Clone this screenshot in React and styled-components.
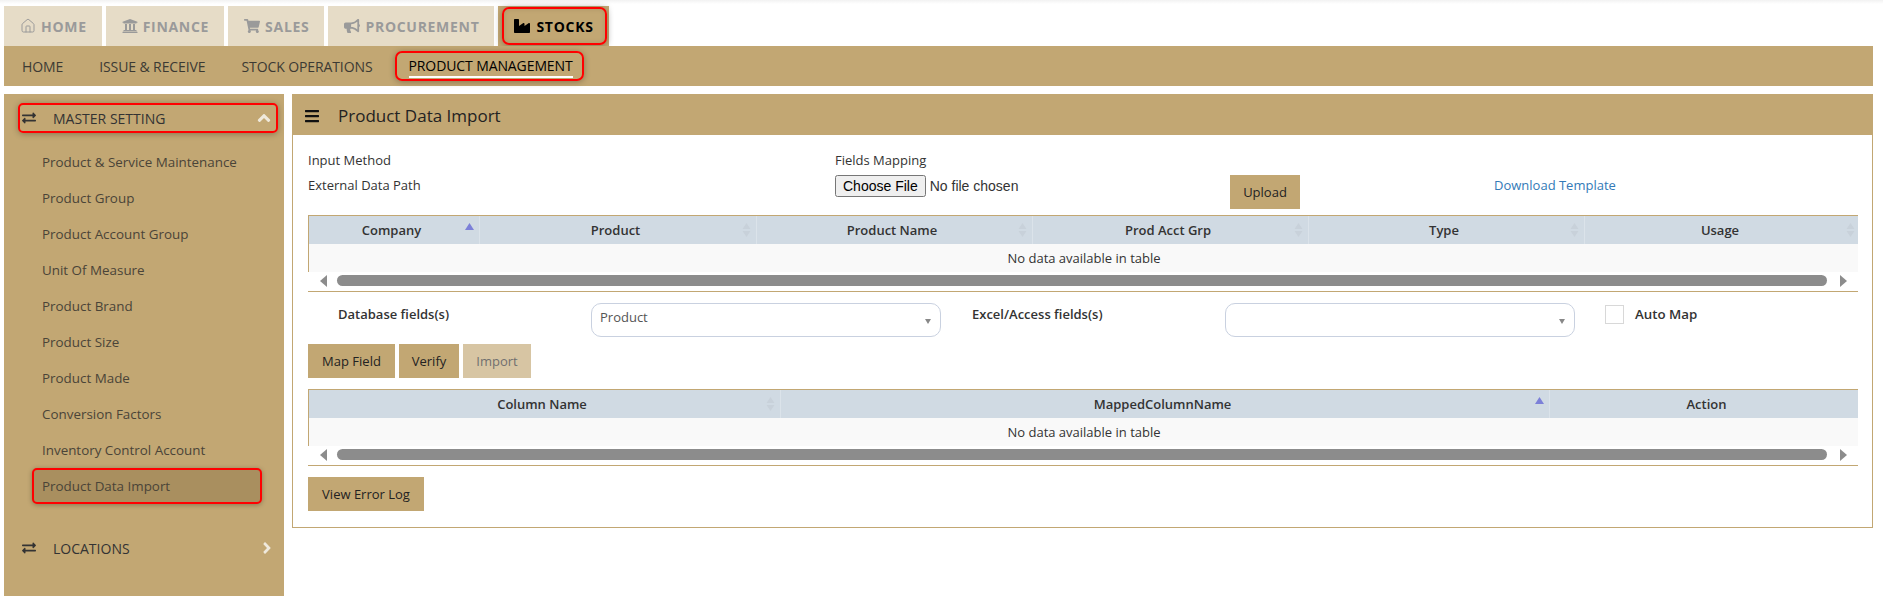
import React from "react";
import styled, { createGlobalStyle } from "styled-components";
import { FaUniversity, FaShoppingCart, FaBullhorn, FaIndustry, FaExchangeAlt, FaBars, FaAngleUp, FaAngleRight } from "react-icons/fa";
import { Home } from "lucide-react";

const TAN = "#c2a773";

const Global = createGlobalStyle`
  html, body { margin: 0; padding: 0; background: #fff; overflow: hidden; }
  body { font-family: "Open Sans", "Liberation Sans", sans-serif; font-size: 13px; color: #333; }
  * { box-sizing: border-box; }
`;

const Page = styled.div`
  width: 1883px;
  height: 596px;
  padding: 6px 10px 0 4px;
  background: linear-gradient(#f2f2f2 0, #fff 4px);
  display: flex;
  flex-direction: column;
`;

const Tabs = styled.nav`
  display: flex;
  gap: 4px;
  height: 40px;
`;

const Tab = styled.div`
  display: flex;
  align-items: center;
  gap: 5px;
  padding: 0 15px 0 16px;
  background: #e6dcc7;
  color: #9a9a9a;
  font-size: 14px;
  font-weight: 700;
  letter-spacing: 0.7px;
`;

const ActiveTab = styled.div`
  display: flex;
  padding: 1px 2px 1px 4px;
  background: ${TAN};
  box-shadow: 0 0 6px rgba(0, 0, 0, 0.08);
`;

const ActiveTabInner = styled.div`
  display: flex;
  align-items: center;
  gap: 6px;
  padding: 0 11px 0 10px;
  color: #000;
  font-size: 14px;
  font-weight: 700;
  letter-spacing: 0.7px;
  border: 2px solid #f00;
  border-radius: 7px;
  box-shadow: 0 1px 6px rgba(0, 0, 0, 0.3), inset 0 0 5px rgba(0, 0, 0, 0.12);
`;

const SubNav = styled.nav`
  display: flex;
  align-items: center;
  height: 40px;
  background: ${TAN};
`;

const SubItem = styled.div`
  padding: 0 18px;
  font-size: 14px;
  letter-spacing: -0.1px;
  color: #3c3a33;
`;

const SubCallout = styled.div`
  display: flex;
  align-items: flex-start;
  margin-left: 4px;
  padding: 0 9px 0 12px;
  height: 30px;
  border: 2px solid #f00;
  border-radius: 7px;
  box-shadow: 0 1px 6px rgba(0, 0, 0, 0.3);
`;

const SubActive = styled.span`
  margin-top: 3px;
  font-size: 14px;
  letter-spacing: -0.1px;
  line-height: 19px;
  color: #000;
  border-bottom: 2px solid #fff;
  padding-bottom: 1px;
`;

const Main = styled.div`
  display: flex;
  gap: 8px;
  margin-top: 8px;
  flex: 1;
  min-height: 0;
`;

const Sidebar = styled.aside`
  width: 280px;
  background: ${TAN};
  padding: 9px 6px 0 14px;
`;

const GroupHead = styled.div`
  display: flex;
  align-items: center;
  height: 30px;
  color: #333;
  font-size: 14px;
  border: ${(p) => (p.$callout ? "2px solid #f00" : "none")};
  border-radius: 5px;
  box-shadow: ${(p) => (p.$callout ? "0 1px 6px rgba(0,0,0,.3)" : "none")};
  margin-top: ${(p) => p.$top || 0}px;
  padding: 0 2px 0 ${(p) => (p.$callout ? 2 : 4)}px;

  > span { flex: 1; margin-left: 17px; }
  > svg:last-child { color: #efe9dc; font-size: ${(p) => (p.$callout ? 20 : 18)}px; }
`;

const MenuList = styled.div`
  margin: 11px 0 0 14px;
`;

const MenuItem = styled.div`
  height: 36px;
  line-height: ${(p) => (p.$active ? 32 : 36)}px;
  padding-left: ${(p) => (p.$active ? 8 : 10)}px;
  width: 230px;
  font-size: 13.4px;
  color: #4a4438;
  ${(p) => p.$active && `
    background: #a98f5f;
    border: 2px solid #f00;
    border-radius: 5px;
    box-shadow: 0 1px 5px rgba(0,0,0,.3);
  `}
`;

const Panel = styled.section`
  flex: 1;
  height: 434px;
  border: 1px solid ${TAN};
  min-width: 0;
`;

const PanelHead = styled.header`
  display: flex;
  align-items: center;
  gap: 18px;
  height: 41px;
  margin: -1px -1px 0;
  padding: 2px 0 0 12px;
  background: ${TAN};
  font-size: 17px;
  color: #222;
  svg { color: #111; }
`;

const PanelBody = styled.div`
  padding: 14px 14px 0 15px;
`;

const FormGrid = styled.div`
  display: grid;
  grid-template-columns: 527px 395px 264px 1fr;
  grid-template-rows: 26px 40px;
`;

const Label = styled.div`
  font-size: 13px;
  line-height: ${(p) => p.$lh || 22}px;
  color: #333;
  grid-column: ${(p) => p.$col || "auto"};
`;

const FileField = styled.input`
  font-family: "Liberation Sans", Arial, sans-serif;
  font-size: 14px;
  color: #333;
  display: block;
  height: 22px;
  width: 300px;
`;

const Btn = styled.button`
  width: ${(p) => p.$w}px;
  height: 34px;
  padding: 0;
  border: 0;
  border-radius: 0;
  background: ${TAN};
  color: #222;
  font-family: inherit;
  font-size: 13px;
  justify-self: start;
  opacity: ${(p) => (p.disabled ? 0.65 : 1)};
`;

const TableWrap = styled.div`
  width: 1550px;
  overflow: hidden;
  border-top: 1px solid ${TAN};
  border-bottom: 1px solid ${TAN};
`;

const Grid = styled.table`
  border-collapse: collapse;
  table-layout: fixed;
  width: ${(p) => p.$w}px;
  border-left: 1px solid ${TAN};
`;

const Th = styled.th`
  position: relative;
  width: ${(p) => p.$w}px;
  height: 28px;
  padding: 0 ${(p) => (p.$plain ? 13 : 18)}px 0 13px;
  background: #d0dae3;
  border-right: 1px solid #dbe3ea;
  font-size: 13px;
  font-weight: 600;
  color: #333;
  text-align: center;
`;

const Td = styled.td`
  height: 28px;
  padding: 0;
  background: #f9f9f9;
  font-size: 13px;
  color: #333;
  text-align: center;
`;

const NoData = styled.div`
  width: 1550px;
`;

const SortMark = styled.svg`
  position: absolute;
  right: 5px;
  top: 6px;
  width: 9px;
  height: 16px;
`;

const Sort = ({ asc }) => (
  <SortMark viewBox="0 0 9 16">
    {asc ? (
      <path d="M4.5 1 L9 8 H0 Z" fill="#7c80d8" />
    ) : (
      <g fill="#c8d1da">
        <path d="M4.5 1 L8.5 7 H0.5 Z" />
        <path d="M4.5 15 L8.5 9 H0.5 Z" />
      </g>
    )}
  </SortMark>
);

const Scroll = styled.div`
  display: flex;
  align-items: center;
  gap: 10px;
  height: 19px;
  padding: 0 11px 2px 12px;
  background: #fff;
`;

const Arrow = styled.span`
  width: 0;
  height: 0;
  border-top: 6px solid transparent;
  border-bottom: 6px solid transparent;
  ${(p) => (p.$right ? "margin-left: 3px; border-left: 7px solid #8c8c8c;" : "border-right: 7px solid #8c8c8c;")}
`;

const Thumb = styled.div`
  flex: 1;
  height: 11px;
  border-radius: 6px;
  background: #8c8c8c;
`;

const MapRow = styled.div`
  display: grid;
  grid-template-columns: 283px 350px 30px 254px 350px 30px 1fr;
  align-items: start;
  padding-top: 11px;
  height: 52px;
`;

const FieldLabel = styled.div`
  font-size: 13px;
  font-weight: 600;
  line-height: 22px;
  color: #333;
  padding-left: ${(p) => p.$pl || 0}px;
  grid-column: ${(p) => p.$col};
`;

const Select = styled.div`
  position: relative;
  height: 34px;
  padding-left: 8px;
  line-height: 26px;
  border: 1px solid #c9d1e0;
  border-radius: 10px;
  background: #fff;
  color: #555;
  font-size: 13px;
  grid-column: ${(p) => p.$col};

  &::after {
    content: "";
    position: absolute;
    right: 9px;
    top: 15px;
    border-top: 5px solid #888;
    border-left: 3px solid transparent;
    border-right: 3px solid transparent;
  }
`;

const AutoMap = styled.div`
  display: flex;
  align-items: center;
  gap: 11px;
  height: 20px;
  margin-top: 1px;
  font-size: 13.3px;
  font-weight: 600;
  grid-column: 7;
`;

const Check = styled.span`
  width: 19px;
  height: 19px;
  border: 1px solid #d8d8d8;
  background: #fff;
`;

const ButtonRow = styled.div`
  display: flex;
  gap: 4px;
  height: 45px;
`;

const TableTwo = styled.div`
  margin-bottom: 11px;
`;

const Link = styled.a`
  color: #337ab7;
  font-size: 13px;
  line-height: 20px;
  text-decoration: none;
`;

const cols1 = [
  ["Company", 171, "asc"],
  ["Product", 277],
  ["Product Name", 276],
  ["Prod Acct Grp", 276],
  ["Type", 276],
  ["Usage", 276],
];
const cols2 = [
  ["Column Name", 472],
  ["MappedColumnName", 769, "asc"],
  ["Action", 314, "none"],
];

const DataTable = ({ cols }) => {
  const w = cols.reduce((a, c) => a + c[1], 0);
  return (
    <TableWrap>
      <Grid $w={w}>
        <thead>
          <tr>
            {cols.map(([t, cw, s]) => (
              <Th key={t} $w={cw} $plain={s === "none"}>
                {t}
                {s !== "none" && <Sort asc={s === "asc"} />}
              </Th>
            ))}
          </tr>
        </thead>
        <tbody>
          <tr>
            <Td colSpan={cols.length}>
              <NoData>No data available in table</NoData>
            </Td>
          </tr>
        </tbody>
      </Grid>
      <Scroll>
        <Arrow />
        <Thumb />
        <Arrow $right />
      </Scroll>
    </TableWrap>
  );
};

const menu = [
  "Product & Service Maintenance",
  "Product Group",
  "Product Account Group",
  "Unit Of Measure",
  "Product Brand",
  "Product Size",
  "Product Made",
  "Conversion Factors",
  "Inventory Control Account",
];

export default function App() {
  return (
    <Page>
      <Global />
      <Tabs>
        <Tab><Home size={16} strokeWidth={1.5} /> HOME</Tab>
        <Tab><FaUniversity size={16} /> FINANCE</Tab>
        <Tab><FaShoppingCart size={16} /> SALES</Tab>
        <Tab><FaBullhorn size={16} /> PROCUREMENT</Tab>
        <ActiveTab>
          <ActiveTabInner><FaIndustry size={16} /> STOCKS</ActiveTabInner>
        </ActiveTab>
      </Tabs>
      <SubNav>
        <SubItem>HOME</SubItem>
        <SubItem>ISSUE &amp; RECEIVE</SubItem>
        <SubItem>STOCK OPERATIONS</SubItem>
        <SubCallout><SubActive>PRODUCT MANAGEMENT</SubActive></SubCallout>
      </SubNav>
      <Main>
        <Sidebar>
          <GroupHead $callout>
            <FaExchangeAlt size={14} />
            <span>MASTER SETTING</span>
            <FaAngleUp />
          </GroupHead>
          <MenuList>
            {menu.map((m) => <MenuItem key={m}>{m}</MenuItem>)}
            <MenuItem $active>Product Data Import</MenuItem>
          </MenuList>
          <GroupHead $top={29}>
            <FaExchangeAlt size={14} />
            <span>LOCATIONS</span>
            <FaAngleRight />
          </GroupHead>
        </Sidebar>
        <Panel>
          <PanelHead>
            <FaBars size={16} />
            Product Data Import
          </PanelHead>
          <PanelBody>
            <FormGrid>
              <Label>Input Method</Label>
              <Label $col="2 / 5">Fields Mapping</Label>
              <Label $lh={20}>External Data Path</Label>
              <FileField type="file" />
              <Btn $w={70}>Upload</Btn>
              <Link href="#">Download Template</Link>
            </FormGrid>
            <DataTable cols={cols1} />
            <MapRow>
              <FieldLabel $col={1} $pl={30}>Database fields(s)</FieldLabel>
              <Select $col={2}>Product</Select>
              <FieldLabel $col={4} $pl={1}>Excel/Access fields(s)</FieldLabel>
              <Select $col={5} />
              <AutoMap><Check /> Auto Map</AutoMap>
            </MapRow>
            <ButtonRow>
              <Btn $w={87}>Map Field</Btn>
              <Btn $w={60}>Verify</Btn>
              <Btn $w={68} disabled>Import</Btn>
            </ButtonRow>
            <TableTwo><DataTable cols={cols2} /></TableTwo>
            <Btn $w={116}>View Error Log</Btn>
          </PanelBody>
        </Panel>
      </Main>
    </Page>
  );
}
